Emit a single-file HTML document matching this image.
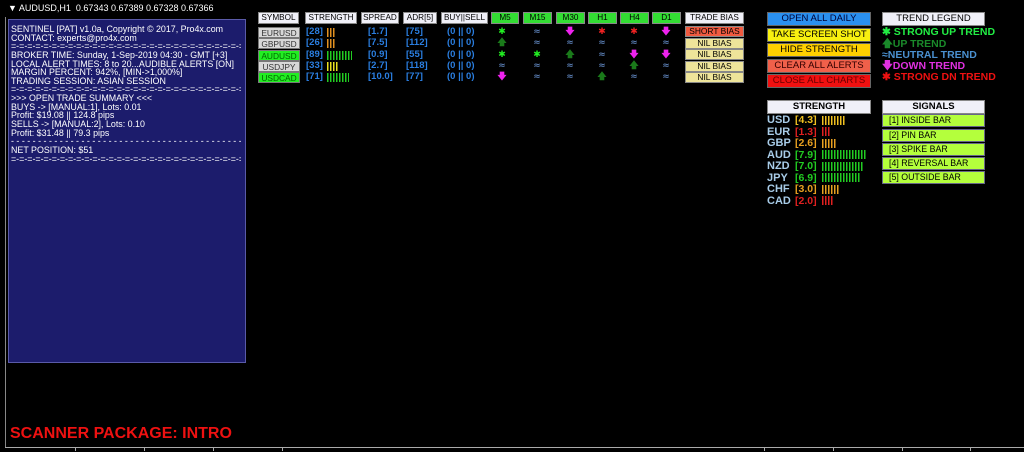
<!DOCTYPE html>
<html><head><meta charset="utf-8"><style>
*{margin:0;padding:0;box-sizing:border-box}
body{width:1024px;height:452px;background:#000;position:relative;overflow:hidden;font-family:"DejaVu Sans","Liberation Sans",sans-serif}
.a{position:absolute;white-space:nowrap}
.panel{left:8px;top:19px;width:238px;height:344px;background:#1c1c6c;border:1px solid #5a5aa8;overflow:hidden}
.pt{position:absolute;left:2px;top:5px;width:230px;overflow:hidden;color:#fff;font-size:8.9px;line-height:8.65px;font-family:"Liberation Sans",sans-serif}
.pt div{white-space:nowrap;height:8.65px}
.hd{background:#f0f0f8;border:1px solid #888;color:#000;font-size:8.2px;text-align:center;line-height:10px;height:12px;font-family:"Liberation Sans",sans-serif}
.tf{background:#33dd33;border:1px solid #888;color:#000;font-size:8.2px;text-align:center;line-height:10px;height:12px;font-family:"Liberation Sans",sans-serif}
.sym{width:42px;height:11px;font-size:8.4px;line-height:10px;text-align:center;border:1px solid #777;font-family:"Liberation Sans",sans-serif}
.g{background:#d8d8d8;color:#333}.l{background:#22ee22;color:#006600}
.bl{color:#2a7ee0;font-size:9.5px;line-height:11px;font-family:"Liberation Sans",sans-serif;font-weight:bold}
.bar{height:9px;background:repeating-linear-gradient(90deg,var(--c) 0 1.5px,transparent 1.5px 3px)}
.bias{width:59px;height:11px;background:#eee49a;border:1px solid #888;font-size:8.4px;line-height:9px;text-align:center;color:#000;font-family:"Liberation Sans",sans-serif}
.ic{font-size:9px;line-height:10px;text-align:center;width:14px;font-weight:bold}
.btn{left:767px;width:104px;height:14px;border:1px solid #666;font-size:9.5px;line-height:12px;text-align:center;font-family:"Liberation Sans",sans-serif}
.leg{left:882px;font-size:10.5px;font-weight:bold;line-height:11px;font-family:"Liberation Sans",sans-serif}
.sl{left:767px;font-size:11px;font-weight:bold;color:#a8cce8;font-family:"Liberation Sans",sans-serif;line-height:11px}
.sv{left:795px;font-size:10.5px;font-weight:bold;font-family:"Liberation Sans",sans-serif;line-height:11px}
.sig{left:882px;width:103px;height:13px;background:#b4ff3c;border:1px solid #668;font-size:8.8px;line-height:11px;padding-left:6px;color:#000;font-family:"Liberation Sans",sans-serif}
</style></head><body>
<div class="a" style="left:8px;top:3px;color:#fff;font-size:9px;font-family:'Liberation Sans',sans-serif">▼ AUDUSD,H1&nbsp; 0.67343 0.67389 0.67328 0.67366</div>
<div class="a" style="left:5px;top:17px;width:1px;height:431px;background:#888"></div>
<div class="a" style="left:5px;top:447px;width:1019px;height:1px;background:#aaa"></div>
<div class="a" style="left:75px;top:447px;width:1px;height:4px;background:#aaa"></div>
<div class="a" style="left:144px;top:447px;width:1px;height:4px;background:#aaa"></div>
<div class="a" style="left:213px;top:447px;width:1px;height:4px;background:#aaa"></div>
<div class="a" style="left:282px;top:447px;width:1px;height:4px;background:#aaa"></div>
<div class="a" style="left:764px;top:447px;width:1px;height:4px;background:#aaa"></div>
<div class="a" style="left:833px;top:447px;width:1px;height:4px;background:#aaa"></div>
<div class="a" style="left:902px;top:447px;width:1px;height:4px;background:#aaa"></div>
<div class="a" style="left:970px;top:447px;width:1px;height:4px;background:#aaa"></div>

<div class="a panel">
<div class="pt">
<div>SENTINEL [PAT] v1.0a, Copyright © 2017, Pro4x.com</div>
<div>CONTACT: experts@pro4x.com</div>
<div>=-=-=-=-=-=-=-=-=-=-=-=-=-=-=-=-=-=-=-=-=-=-=-=-=-=-=-=-=-=-=-=-=-=-=-=-=-=-</div>
<div>BROKER TIME: Sunday, 1-Sep-2019 04:30 - GMT [+3]</div>
<div>LOCAL ALERT TIMES: 8 to 20...AUDIBLE ALERTS [ON]</div>
<div>MARGIN PERCENT: 942%, [MIN-&gt;1,000%]</div>
<div>TRADING SESSION: ASIAN SESSION</div>
<div>=-=-=-=-=-=-=-=-=-=-=-=-=-=-=-=-=-=-=-=-=-=-=-=-=-=-=-=-=-=-=-=-=-=-=-=-=-=-</div>
<div>&gt;&gt;&gt; OPEN TRADE SUMMARY &lt;&lt;&lt;</div>
<div>BUYS -&gt; [MANUAL:1], Lots: 0.01</div>
<div>Profit: $19.08 || 124.8 pips</div>
<div>SELLS -&gt; [MANUAL:2], Lots: 0.10</div>
<div>Profit: $31.48 || 79.3 pips</div>
<div>- - - - - - - - - - - - - - - - - - - - - - - - - - - - - - - - - - - - - - - - - - - - -</div>
<div>NET POSITION: $51</div>
<div>=-=-=-=-=-=-=-=-=-=-=-=-=-=-=-=-=-=-=-=-=-=-=-=-=-=-=-=-=-=-=-=-=-=-=-=-=-=-</div>
</div>
</div>

<div class="a hd" style="left:258px;top:12px;width:41px">SYMBOL</div>
<div class="a hd" style="left:305px;top:12px;width:52px">STRENGTH</div>
<div class="a hd" style="left:361px;top:12px;width:38px">SPREAD</div>
<div class="a hd" style="left:403px;top:12px;width:34px">ADR[5]</div>
<div class="a hd" style="left:441px;top:12px;width:47px">BUY||SELL</div>
<div class="a tf" style="left:491px;top:12px;width:28px">M5</div>
<div class="a tf" style="left:523px;top:12px;width:29px">M15</div>
<div class="a tf" style="left:556px;top:12px;width:29px">M30</div>
<div class="a tf" style="left:588px;top:12px;width:29px">H1</div>
<div class="a tf" style="left:620px;top:12px;width:29px">H4</div>
<div class="a tf" style="left:652px;top:12px;width:29px">D1</div>
<div class="a hd" style="left:685px;top:12px;width:59px">TRADE BIAS</div>

<div class="a sym g" style="left:258px;top:27px">EURUSD</div>
<div class="a sym g" style="left:258px;top:38px">GBPUSD</div>
<div class="a sym l" style="left:258px;top:50px">AUDUSD</div>
<div class="a sym g" style="left:258px;top:61px">USDJPY</div>
<div class="a sym l" style="left:258px;top:72px">USDCAD</div>

<div class="a bl" style="left:306px;top:26px;line-height:11.3px">[28]<br>[26]<br>[89]<br>[33]<br>[71]</div>
<div class="a bar" style="left:327px;top:28px;width:8px;--c:#e09020"></div>
<div class="a bar" style="left:327px;top:39px;width:8px;--c:#e09020"></div>
<div class="a bar" style="left:327px;top:51px;width:25px;--c:#22cc22"></div>
<div class="a bar" style="left:327px;top:62px;width:11px;--c:#e8e020"></div>
<div class="a bar" style="left:327px;top:73px;width:22px;--c:#22cc22"></div>
<div class="a bl" style="left:368px;top:26px;line-height:11.3px">[1.7]<br>[7.5]<br>[0.9]<br>[2.7]<br>[10.0]</div>
<div class="a bl" style="left:406px;top:26px;line-height:11.3px">[75]<br>[112]<br>[55]<br>[118]<br>[77]</div>
<div class="a bl" style="left:447px;top:26px;line-height:11.3px">(0 || 0)<br>(0 || 0)<br>(0 || 0)<br>(0 || 0)<br>(0 || 0)</div>

<div class="a ic" style="left:495px;top:27px;line-height:11.3px"><span style="color:#2e2">✱</span><br><span style="color:#1a7a1a">🡅</span><br><span style="color:#2e2">✱</span><br><span style="color:#5577aa">≈</span><br><span style="color:#e2e">🡇</span></div>
<div class="a ic" style="left:530px;top:27px;line-height:11.3px"><span style="color:#5577aa">≈</span><br><span style="color:#5577aa">≈</span><br><span style="color:#2e2">✱</span><br><span style="color:#5577aa">≈</span><br><span style="color:#5577aa">≈</span></div>
<div class="a ic" style="left:563px;top:27px;line-height:11.3px"><span style="color:#e2e">🡇</span><br><span style="color:#5577aa">≈</span><br><span style="color:#1a7a1a">🡅</span><br><span style="color:#5577aa">≈</span><br><span style="color:#5577aa">≈</span></div>
<div class="a ic" style="left:595px;top:27px;line-height:11.3px"><span style="color:#e22">✱</span><br><span style="color:#5577aa">≈</span><br><span style="color:#5577aa">≈</span><br><span style="color:#5577aa">≈</span><br><span style="color:#1a7a1a">🡅</span></div>
<div class="a ic" style="left:627px;top:27px;line-height:11.3px"><span style="color:#e22">✱</span><br><span style="color:#5577aa">≈</span><br><span style="color:#e2e">🡇</span><br><span style="color:#1a7a1a">🡅</span><br><span style="color:#5577aa">≈</span></div>
<div class="a ic" style="left:659px;top:27px;line-height:11.3px"><span style="color:#e2e">🡇</span><br><span style="color:#5577aa">≈</span><br><span style="color:#e2e">🡇</span><br><span style="color:#5577aa">≈</span><br><span style="color:#5577aa">≈</span></div>

<div class="a bias" style="left:685px;top:26px;background:#f05a40">SHORT BIAS</div>
<div class="a bias" style="left:685px;top:38px">NIL BIAS</div>
<div class="a bias" style="left:685px;top:49px">NIL BIAS</div>
<div class="a bias" style="left:685px;top:61px">NIL BIAS</div>
<div class="a bias" style="left:685px;top:72px">NIL BIAS</div>

<div class="a btn" style="top:12px;background:#2a90f0;color:#003">OPEN ALL DAILY</div>
<div class="a btn" style="top:28px;background:#f8f010;color:#000">TAKE SCREEN SHOT</div>
<div class="a btn" style="top:43px;background:#ffd000;color:#000">HIDE STRENGTH</div>
<div class="a btn" style="top:59px;background:#f0604a;color:#300">CLEAR ALL ALERTS</div>
<div class="a btn" style="top:74px;background:#f01010;color:#600">CLOSE ALL CHARTS</div>

<div class="a hd" style="left:882px;top:12px;width:103px;height:14px;line-height:12px;font-size:9.5px">TREND LEGEND</div>
<div class="a leg" style="top:27px;color:#22ee44">✱ STRONG UP TREND</div>
<div class="a leg" style="top:39px;color:#1a8a2a">🡅UP TREND</div>
<div class="a leg" style="top:50px;color:#4a90d0">≈NEUTRAL TREND</div>
<div class="a leg" style="top:61px;color:#e030e0">🡇DOWN TREND</div>
<div class="a leg" style="top:72px;color:#ee1111">✱ STRONG DN TREND</div>

<div class="a hd" style="left:767px;top:100px;width:104px;height:14px;line-height:12px;font-size:9.5px;font-weight:bold">STRENGTH</div>
<div class="a hd" style="left:882px;top:100px;width:103px;height:14px;line-height:12px;font-size:9.5px;font-weight:bold">SIGNALS</div>

<div class="a sl" style="top:115px;line-height:11.5px">USD<br>EUR<br>GBP<br>AUD<br>NZD<br>JPY<br>CHF<br>CAD</div>
<div class="a sv" style="top:115px;line-height:11.5px"><span style="color:#f0c020">[4.3]</span><br><span style="color:#e02020">[1.3]</span><br><span style="color:#e8a020">[2.6]</span><br><span style="color:#22cc22">[7.9]</span><br><span style="color:#22cc22">[7.0]</span><br><span style="color:#22cc22">[6.9]</span><br><span style="color:#e8a020">[3.0]</span><br><span style="color:#e02020">[2.0]</span></div>
<div class="a bar" style="left:822px;top:116px;width:24px;--c:#f0c020"></div>
<div class="a bar" style="left:822px;top:127px;width:8px;--c:#e02020"></div>
<div class="a bar" style="left:822px;top:139px;width:15px;--c:#e8a020"></div>
<div class="a bar" style="left:822px;top:150px;width:45px;--c:#22cc22"></div>
<div class="a bar" style="left:822px;top:162px;width:42px;--c:#22cc22"></div>
<div class="a bar" style="left:822px;top:173px;width:39px;--c:#22cc22"></div>
<div class="a bar" style="left:822px;top:185px;width:18px;--c:#e8a020"></div>
<div class="a bar" style="left:822px;top:196px;width:12px;--c:#e02020"></div>

<div class="a sig" style="top:114px">[1] INSIDE BAR</div>
<div class="a sig" style="top:129px">[2] PIN BAR</div>
<div class="a sig" style="top:143px">[3] SPIKE BAR</div>
<div class="a sig" style="top:157px">[4] REVERSAL BAR</div>
<div class="a sig" style="top:171px">[5] OUTSIDE BAR</div>

<div class="a" style="left:10px;top:425px;color:#ee1111;font-size:16px;font-weight:bold;font-family:'Liberation Sans',sans-serif">SCANNER PACKAGE: INTRO</div>
</body></html>
